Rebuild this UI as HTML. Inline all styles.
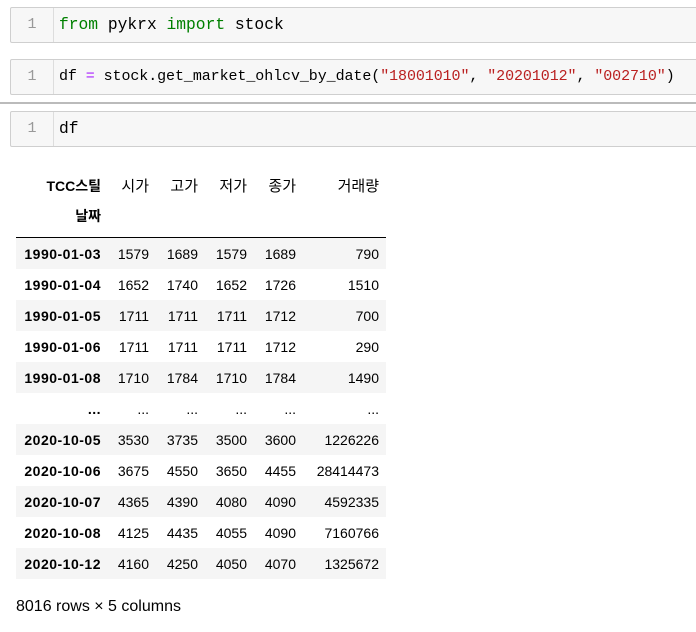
<!DOCTYPE html><html><head><meta charset="utf-8"><style>
body{margin:0;width:696px;height:632px;background:#fff;position:relative;overflow:hidden}
.cell{position:absolute;left:10px;width:700px;height:34px;border:1px solid #cfcfcf;border-radius:2px;background:#f7f7f7}
.g{position:absolute;left:0;top:0;width:42px;height:34px;border-right:1px solid #ddd;color:#999;font:15px "Liberation Mono",monospace;line-height:34px;text-align:center}
.c{position:absolute;left:48px;top:0;font:15px "Liberation Mono",monospace;line-height:34px;color:#000;white-space:pre}
.k{color:#008000}.o{color:#aa22ff}.s{color:#ba2121}
.sep{position:absolute;left:0;top:102px;width:696px;height:2px;background:#bbb}
table{position:absolute;left:16px;top:170px;border-collapse:collapse;font:14px "Liberation Sans","Noto Sans CJK KR",sans-serif;color:#000}
td,th{height:31px;padding:0 7px 0 0;text-align:right;white-space:nowrap}
th{font-weight:bold}
tbody th{letter-spacing:0.5px}
thead th.n{font-weight:normal;font-size:15px}
tbody tr:nth-child(odd){background:#f5f5f5}
thead tr:last-child th{border-bottom:1px solid #000;height:36px;vertical-align:top;padding-top:0;line-height:31px}
.f{position:absolute;left:16px;top:598px;font:16px "Liberation Sans",sans-serif}
</style></head><body>
<div class="cell" style="top:7px"><div class="g">1</div><div class="c" style="font-size:16.3px"><span class="k">from</span> pykrx <span class="k">import</span> stock</div></div>
<div class="cell" style="top:59px"><div class="g">1</div><div class="c" style="letter-spacing:-0.08px;font-size:15px">df <span class="o">=</span> stock.get_market_ohlcv_by_date(<span class="s">"18001010"</span>, <span class="s">"20201012"</span>, <span class="s">"002710"</span>)</div></div>
<div class="sep"></div>
<div class="cell" style="top:111px"><div class="g">1</div><div class="c" style="font-size:16.3px">df</div></div>
<table>
<colgroup><col style="width:92px"><col style="width:48px"><col style="width:49px"><col style="width:49px"><col style="width:49px"><col style="width:83px"></colgroup>
<thead><tr><th>TCC스틸</th><th class="n">시가</th><th class="n">고가</th><th class="n">저가</th><th class="n">종가</th><th class="n">거래량</th></tr>
<tr><th>날짜</th><th></th><th></th><th></th><th></th><th></th></tr></thead>
<tbody>
<tr><th>1990-01-03</th><td>1579</td><td>1689</td><td>1579</td><td>1689</td><td>790</td></tr>
<tr><th>1990-01-04</th><td>1652</td><td>1740</td><td>1652</td><td>1726</td><td>1510</td></tr>
<tr><th>1990-01-05</th><td>1711</td><td>1711</td><td>1711</td><td>1712</td><td>700</td></tr>
<tr><th>1990-01-06</th><td>1711</td><td>1711</td><td>1711</td><td>1712</td><td>290</td></tr>
<tr><th>1990-01-08</th><td>1710</td><td>1784</td><td>1710</td><td>1784</td><td>1490</td></tr>
<tr style="background:#fff"><th>...</th><td>...</td><td>...</td><td>...</td><td>...</td><td>...</td></tr>
<tr style="background:#f5f5f5"><th>2020-10-05</th><td>3530</td><td>3735</td><td>3500</td><td>3600</td><td>1226226</td></tr>
<tr style="background:#fff"><th>2020-10-06</th><td>3675</td><td>4550</td><td>3650</td><td>4455</td><td>28414473</td></tr>
<tr style="background:#f5f5f5"><th>2020-10-07</th><td>4365</td><td>4390</td><td>4080</td><td>4090</td><td>4592335</td></tr>
<tr style="background:#fff"><th>2020-10-08</th><td>4125</td><td>4435</td><td>4055</td><td>4090</td><td>7160766</td></tr>
<tr style="background:#f5f5f5"><th>2020-10-12</th><td>4160</td><td>4250</td><td>4050</td><td>4070</td><td>1325672</td></tr>
</tbody></table>
<div class="f">8016 rows × 5 columns</div>
</body></html>
